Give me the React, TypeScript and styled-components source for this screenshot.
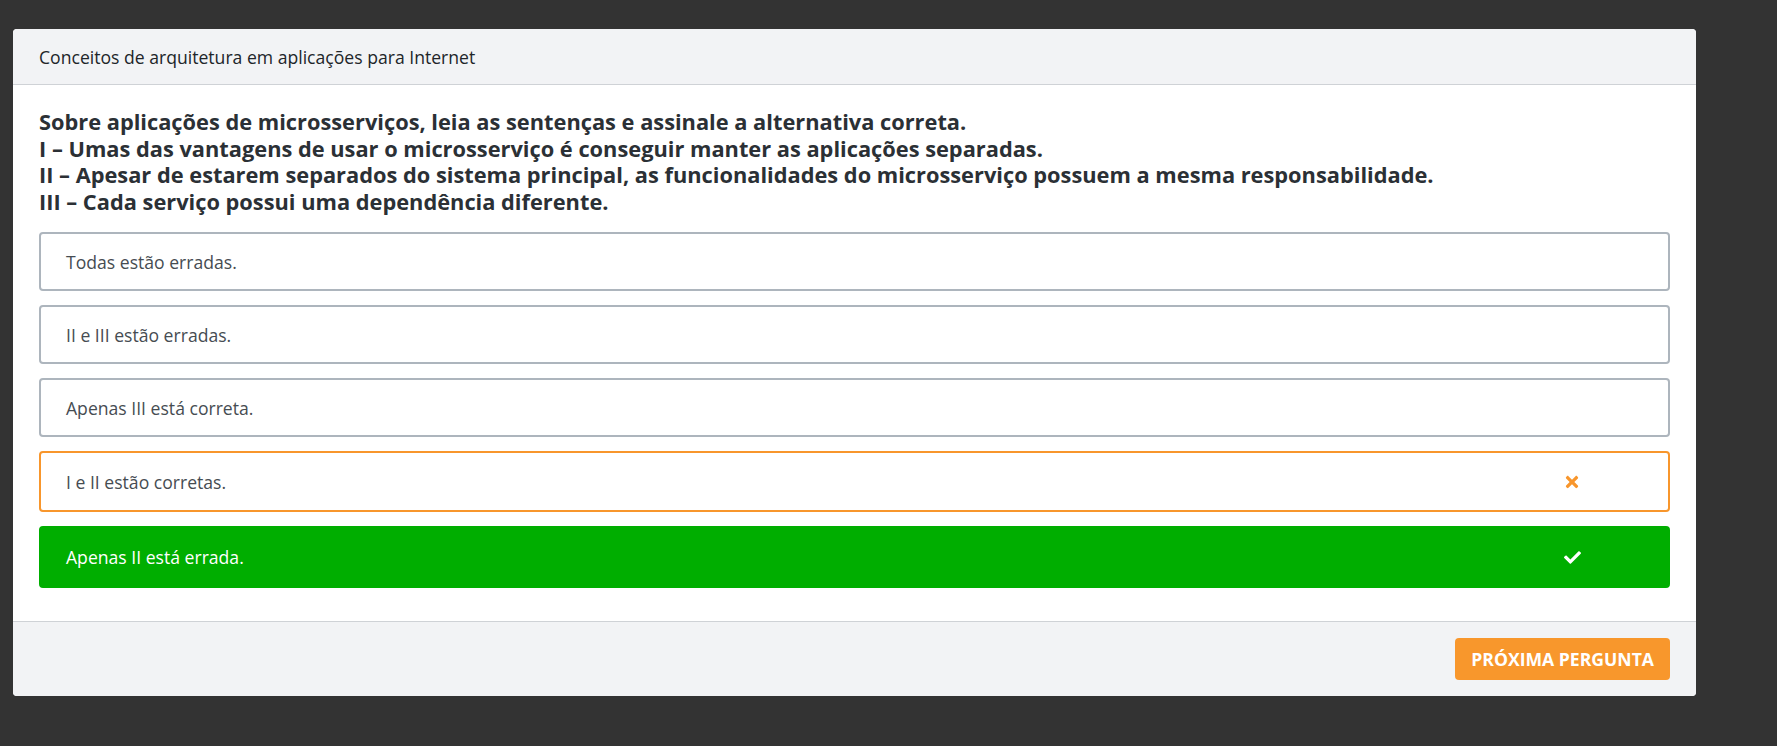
import React from "react";
import styled, { createGlobalStyle, css } from "styled-components";
import { FaTimes, FaCheck } from "react-icons/fa";

const GlobalStyle = createGlobalStyle`
  * { box-sizing: border-box; }
  html, body { margin: 0; padding: 0; background: #333333; }
  body { font-family: "Open Sans", "Noto Sans", sans-serif; }
`;

const Page = styled.div`
  padding: 29px 81px 40px 13px;
`;

const Card = styled.section`
  background: #ffffff;
  border-radius: 4px;
  overflow: hidden;
`;

const Header = styled.header`
  background: #f2f3f5;
  border-bottom: 1px solid #cfd2d6;
  padding: 15px 26px 14px;
  font-size: 17.6px;
  line-height: 26px;
  color: #212529;
`;

const Body = styled.div`
  padding: 24px 26px 33px;
  display: flex;
  flex-direction: column;
`;

const Question = styled.p`
  margin: 0 0 17px;
  font-size: 21.8px;
  line-height: 26.6px;
  font-weight: 700;
  color: #2b3035;
`;

const Options = styled.div`
  display: flex;
  flex-direction: column;
  gap: 14px;
`;

type Status = "idle" | "wrong" | "right";

const Option = styled.div<{ $status: Status }>`
  display: flex;
  align-items: center;
  min-height: 59px;
  padding: 0 87px 0 25px;
  border: 2px solid #adb5bd;
  border-radius: 4px;
  font-size: 17.6px;
  line-height: 26px;
  color: #464c52;
  background: #ffffff;
  ${(p) =>
    p.$status === "wrong" &&
    css`
      border-color: #f8962c;
      min-height: 61px;
    `}
  ${(p) =>
    p.$status === "right" &&
    css`
      border-color: #00ae00;
      background: #00ae00;
      color: #ffffff;
      min-height: 62px;
    `}
`;

const OptionText = styled.span`
  flex: 1;
`;

const Mark = styled.span<{ $color: string }>`
  display: inline-flex;
  align-items: center;
  justify-content: center;
  width: 18px;
  color: ${(p) => p.$color};
`;

const Footer = styled.footer`
  background: #f2f3f5;
  border-top: 1px solid #cfd2d6;
  padding: 16px 26px 16px;
  display: flex;
  justify-content: flex-end;
`;

const NextButton = styled.button`
  height: 42px;
  padding: 0 16px;
  border: none;
  border-radius: 4px;
  background: #f8972c;
  color: #ffffff;
  font-family: "Open Sans", "Noto Sans", sans-serif;
  font-size: 17.6px;
  font-weight: 700;
  text-transform: uppercase;
  cursor: pointer;
`;

const options: { text: string; status: Status }[] = [
  { text: "Todas estão erradas.", status: "idle" },
  { text: "II e III estão erradas.", status: "idle" },
  { text: "Apenas III está correta.", status: "idle" },
  { text: "I e II estão corretas.", status: "wrong" },
  { text: "Apenas II está errada.", status: "right" },
];

export default function App() {
  return (
    <>
      <GlobalStyle />
      <Page>
        <Card>
          <Header>Conceitos de arquitetura em aplicações para Internet</Header>
          <Body>
            <Question>
              Sobre aplicações de microsserviços, leia as sentenças e assinale a alternativa correta.
              <br />I – Umas das vantagens de usar o microsserviço é conseguir manter as aplicações separadas.
              <br />II – Apesar de estarem separados do sistema principal, as funcionalidades do microsserviço possuem a mesma responsabilidade.
              <br />III – Cada serviço possui uma dependência diferente.
            </Question>
            <Options>
              {options.map((o) => (
                <Option key={o.text} $status={o.status}>
                  <OptionText>{o.text}</OptionText>
                  {o.status === "wrong" && (
                    <Mark $color="#f8962c">
                      <FaTimes size={18} />
                    </Mark>
                  )}
                  {o.status === "right" && (
                    <Mark $color="#ffffff">
                      <FaCheck size={17} />
                    </Mark>
                  )}
                </Option>
              ))}
            </Options>
          </Body>
          <Footer>
            <NextButton>Próxima pergunta</NextButton>
          </Footer>
        </Card>
      </Page>
    </>
  );
}
